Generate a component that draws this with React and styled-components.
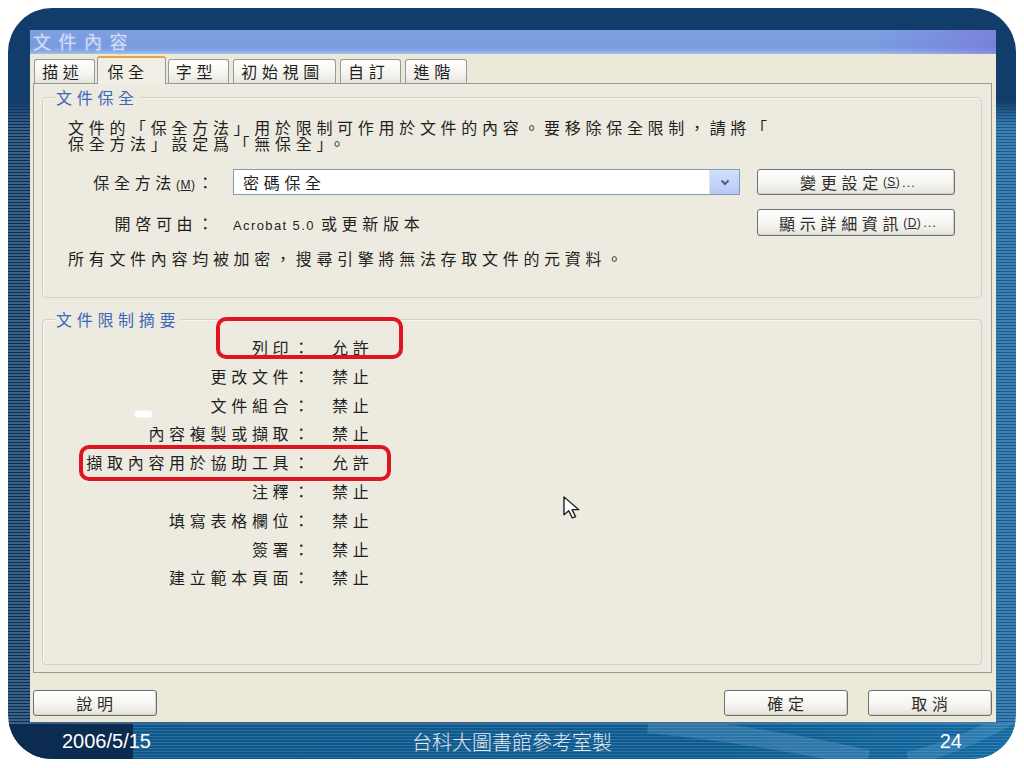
import React from "react";
import styled, { createGlobalStyle } from "styled-components";

const CJK = `"Noto Sans CJK TC", "Liberation Sans", sans-serif`;
const LATIN = `"Liberation Sans", "Noto Sans CJK TC", sans-serif`;

const GlobalStyle = createGlobalStyle`
  html, body { margin: 0; padding: 0; background: #fff; }
  body { font-family: ${CJK}; }
  * { box-sizing: border-box; }
`;

const Page = styled.div`
  width: 1024px;
  height: 768px;
  padding: 8px;
  background: #fff;
`;

const Slide = styled.div`
  height: 751px;
  border-radius: 44px;
  overflow: hidden;
  display: flex;
  flex-direction: column;
  background:
    linear-gradient(180deg, #123c69 0, #123c69 92px, rgba(18, 60, 105, 0) 118px),
    repeating-linear-gradient(180deg, rgba(140, 178, 215, 0.38) 0 1.5px, rgba(0, 0, 0, 0) 1.5px 3px),
    linear-gradient(90deg, #0b2d52 0%, #0f3a64 50%, #15609a 100%);
`;

const Stage = styled.div`
  flex: 1;
  display: flex;
  padding: 22px 20px 2px 22px;
`;

const Dialog = styled.div`
  flex: 1;
  display: flex;
  flex-direction: column;
  background: #ece9d8;
  color: #1f1f1f;
  font-size: 16px;
  letter-spacing: 4.7px;
`;

const TitleBar = styled.div`
  height: 24px;
  padding-left: 3px;
  line-height: 23px;
  font-size: 18px;
  letter-spacing: 7.5px;
  color: #d3ddf8;
  text-shadow: 0 0 2px rgba(255, 255, 255, 0.35);
  background:
    linear-gradient(90deg, rgba(0, 0, 0, 0) 88%, rgba(118, 96, 214, 0.45) 100%),
    linear-gradient(180deg, #7f9fe0 0%, #789ade 70%, #8bace9 90%, #a7bfee 100%);
`;

const DialogBody = styled.div`
  flex: 1;
  display: flex;
  flex-direction: column;
  padding: 0 4px 6px 3px;
`;

const TabStrip = styled.div`
  height: 29px;
  display: flex;
  align-items: flex-end;
  padding-left: 1px;
`;

const Tab = styled.div`
  position: relative;
  z-index: ${p => (p.$active ? 1 : 0)};
  height: ${p => (p.$active ? 28 : 24)}px;
  margin: 0 ${p => (p.$active ? 2 : 4)}px ${p => (p.$active ? -1 : 0)}px ${p => (p.$active ? -2 : 0)}px;
  padding: ${p => (p.$active ? "0 16px 0 9px" : "0 11px 0 7px")};
  line-height: ${p => (p.$active ? 26 : 23)}px;
  border: 1px solid #919b9c;
  border-bottom: none;
  border-top: ${p => (p.$active ? "2px solid #e8a343" : "1px solid #919b9c")};
  border-radius: 3px 3px 0 0;
  background: ${p =>
    p.$active
      ? "#f1efe5"
      : "linear-gradient(180deg, #ffffff 0%, #f5f4ef 60%, #e6e4da 100%)"};
  white-space: nowrap;
`;

const Panel = styled.div`
  flex: 1;
  display: flex;
  flex-direction: column;
  border: 1px solid #919b9c;
  background: #edebe0;
  padding: 13px 9px 7px 8px;
`;

const GroupBox = styled.div`
  position: relative;
  margin-top: ${p => p.$gap || 0}px;
  border: 1px solid #d3d0c1;
  border-radius: 4px;
  box-shadow: inset 1px 1px 0 #f7f6f0;
  ${p => (p.$grow ? "flex: 1;" : "")}
`;

const Legend = styled.div`
  width: fit-content;
  margin: -10px 0 0 12px;
  padding: 0 1px;
  line-height: 18px;
  background: #edebe0;
  color: #3d66b8;
`;

const SecurityBody = styled.div`
  padding: 0 26px 29px 25px;
`;

const Para = styled.p`
  margin: 13px 0 0;
  line-height: 16px;
  white-space: pre-line;
`;

const FieldRow = styled.div`
  display: flex;
  align-items: center;
  height: ${p => p.$h || 26}px;
  margin-top: ${p => p.$gap}px;
`;

const FieldLabel = styled.div`
  width: 150px;
  flex-shrink: 0;
  margin-right: 15px;
  text-align: right;
  white-space: nowrap;
`;

const Mnemonic = styled.span`
  font-family: ${LATIN};
  font-size: 12px;
  letter-spacing: 0.4px;
  margin-right: 2px;
`;

const Combo = styled.div`
  flex: 1;
  height: 26px;
  display: flex;
  align-items: center;
  padding-left: 9px;
  border: 1px solid #7f9db9;
  background: #fff;
`;

const DropButton = styled.div`
  margin-left: auto;
  width: 30px;
  height: 24px;
  display: flex;
  align-items: center;
  justify-content: center;
  border-left: 1px solid #dbe5fb;
  background: linear-gradient(180deg, #d3e0fb 0%, #c1d3f8 60%, #b5c8f3 100%);
`;

const ActionButton = styled.div`
  flex-shrink: 0;
  width: ${p => p.$w || 124}px;
  height: ${p => p.$h || 26}px;
  margin-left: ${p => p.$offset || 0}px;
  display: flex;
  align-items: center;
  justify-content: center;
  padding-left: 4px;
  border: 1px solid #6a7079;
  border-radius: 3px;
  background: linear-gradient(180deg, #ffffff 0%, #f6f5f0 55%, #e5e3da 100%);
  box-shadow: inset -1px -1px 0 #d6d3c6;
  color: #2d2d2d;
  white-space: nowrap;
`;

const Dots = styled.span`
  font-family: ${LATIN};
  font-size: 13px;
  letter-spacing: 1px;
`;

const Version = styled.div`
  flex: 1;
  white-space: nowrap;
`;

const Latin = styled.span`
  font-family: ${LATIN};
  font-size: 13px;
  letter-spacing: 1.4px;
  margin-right: 6px;
`;

const Note = styled.div`
  margin-top: 12px;
  line-height: 20px;
`;

const RestrictList = styled.div`
  display: grid;
  grid-template-columns: 271px auto;
  column-gap: 18px;
  margin-top: 5px;
  line-height: 28.8px;
`;

const RestrictLabel = styled.div`
  text-align: right;
  white-space: nowrap;
`;

const Highlight = styled.div`
  position: absolute;
  left: ${p => p.$x}px;
  top: ${p => p.$y}px;
  width: ${p => p.$w}px;
  height: ${p => p.$h}px;
  border: 4px solid #df1620;
  border-radius: 10px;
  pointer-events: none;
`;

const Smudge = styled.div`
  position: absolute;
  left: 92px;
  top: 91px;
  width: 17px;
  height: 6px;
  border-radius: 3px;
  background: #fff;
  box-shadow: 0 0 3px #fff;
`;

const Pointer = styled.svg`
  position: absolute;
  left: 520px;
  top: 176px;
`;

const ButtonRow = styled.div`
  display: flex;
  justify-content: space-between;
  margin-top: 17px;
`;

const ButtonGroup = styled.div`
  display: flex;
  gap: 20px;
`;

const Footer = styled.div`
  position: relative;
  height: 35px;
  display: grid;
  grid-template-columns: 1fr auto 1fr;
  align-items: center;
  padding: 0 54px;
  color: #fff;
  background:
    linear-gradient(90deg, #0b2c50 0, #0b2c50 125px, rgba(0, 0, 0, 0) 125px),
    repeating-linear-gradient(180deg, rgba(150, 195, 230, 0.22) 0 1.5px, rgba(0, 0, 0, 0) 1.5px 3px),
    linear-gradient(90deg, #0e5689 0%, #0f5b8f 70%, #136aa0 100%);
`;

const FooterArt = styled.svg`
  position: absolute;
  inset: 0;
  pointer-events: none;
`;

const FooterText = styled.div`
  position: relative;
  font-family: ${p => (p.$cjk ? CJK : LATIN)};
  font-size: 20px;
  font-weight: ${p => (p.$cjk ? 300 : 400)};
  color: ${p => (p.$cjk ? "#e2e9f2" : "#fff")};
  text-align: ${p => p.$align || "left"};
  white-space: nowrap;
`;

const tabs = ["描述", "保全", "字型", "初始視圖", "自訂", "進階"];

const restrictions = [
  ["列印：", "允許"],
  ["更改文件：", "禁止"],
  ["文件組合：", "禁止"],
  ["內容複製或擷取：", "禁止"],
  ["擷取內容用於協助工具：", "允許"],
  ["注釋：", "禁止"],
  ["填寫表格欄位：", "禁止"],
  ["簽署：", "禁止"],
  ["建立範本頁面：", "禁止"],
];

const intro = "文件的「保全方法」用於限制可作用於文件的內容。要移除保全限制，請將「\n保全方法」設定爲「無保全」。";

const Mn = ({ k }) => (
  <Mnemonic>
    (<u>{k}</u>)
  </Mnemonic>
);

export default function App() {
  return (
    <Page>
      <GlobalStyle />
      <Slide>
        <Stage>
          <Dialog>
            <TitleBar>文件內容</TitleBar>
            <DialogBody>
              <TabStrip>
                {tabs.map(t => (
                  <Tab key={t} $active={t === "保全"}>
                    {t}
                  </Tab>
                ))}
              </TabStrip>

              <Panel>
                <GroupBox>
                  <Legend>文件保全</Legend>
                  <SecurityBody>
                    <Para>{intro}</Para>

                    <FieldRow $gap={18}>
                      <FieldLabel>
                        保全方法<Mn k="M" />：
                      </FieldLabel>
                      <Combo>
                        密碼保全
                        <DropButton>
                          <svg width="10" height="7" viewBox="0 0 10 7">
                            <polyline points="1.5,1.5 5,5 8.5,1.5" fill="none" stroke="#4d6185" strokeWidth="2" />
                          </svg>
                        </DropButton>
                      </Combo>
                      <ActionButton $w={198} $offset={17}>
                        變更設定<Mn k="S" />
                        <Dots>...</Dots>
                      </ActionButton>
                    </FieldRow>

                    <FieldRow $gap={14} $h={27}>
                      <FieldLabel>開啓可由：</FieldLabel>
                      <Version>
                        <Latin>Acrobat 5.0</Latin>或更新版本
                      </Version>
                      <ActionButton $w={198} $h={27}>
                        顯示詳細資訊<Mn k="D" />
                        <Dots>...</Dots>
                      </ActionButton>
                    </FieldRow>

                    <Note>所有文件內容均被加密，搜尋引擎將無法存取文件的元資料。</Note>
                  </SecurityBody>
                </GroupBox>

                <GroupBox $gap={21} $grow>
                  <Legend>文件限制摘要</Legend>
                  <RestrictList>
                    {restrictions.map(([label, value]) => (
                      <React.Fragment key={label}>
                        <RestrictLabel>{label}</RestrictLabel>
                        <div>{value}</div>
                      </React.Fragment>
                    ))}
                  </RestrictList>
                  <Smudge />
                  <Highlight $x={173} $y={-3} $w={187} $h={42} />
                  <Highlight $x={36} $y={125} $w={312} $h={36} />
                  <Pointer width="17" height="23" viewBox="0 0 12.5 19.5" preserveAspectRatio="none">
                    <path
                      d="M0.7 0.7 V16 L4.2 12.5 L6.9 18.6 L9.3 17.5 L6.7 11.6 H11.6 Z"
                      fill="#fff"
                      stroke="#1a1a1a"
                      strokeWidth="1"
                      strokeLinejoin="round"
                    />
                  </Pointer>
                </GroupBox>
              </Panel>

              <ButtonRow>
                <ActionButton>說明</ActionButton>
                <ButtonGroup>
                  <ActionButton>確定</ActionButton>
                  <ActionButton>取消</ActionButton>
                </ButtonGroup>
              </ButtonRow>
            </DialogBody>
          </Dialog>
        </Stage>

        <Footer>
          <FooterArt viewBox="0 0 1008 35" preserveAspectRatio="none">
            <path d="M640 0 Q760 12 860 35" fill="none" stroke="rgba(150,200,235,0.22)" strokeWidth="18" />
            <path d="M900 35 Q960 20 1008 -10" fill="none" stroke="rgba(150,200,235,0.2)" strokeWidth="14" />
          </FooterArt>
          <FooterText>2006/5/15</FooterText>
          <FooterText $cjk $align="center">台科大圖書館參考室製</FooterText>
          <FooterText $align="right">24</FooterText>
        </Footer>
      </Slide>
    </Page>
  );
}
